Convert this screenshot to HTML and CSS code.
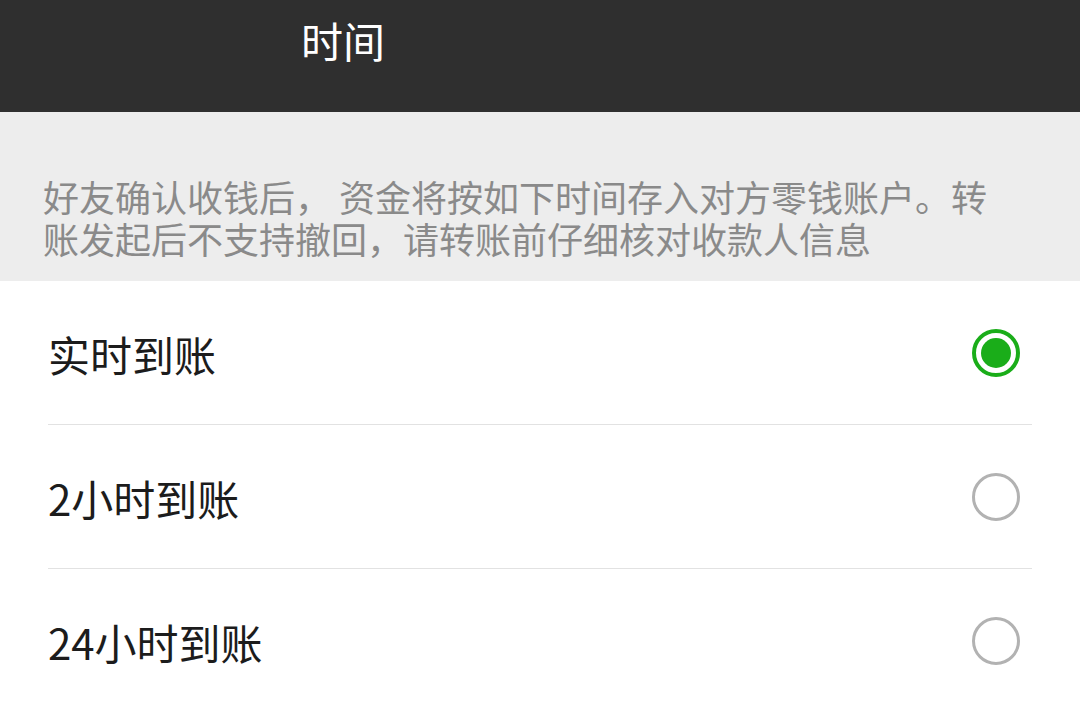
FILE: index.html
```html
<!DOCTYPE html>
<html lang="zh-CN">
<head>
<meta charset="utf-8">
<title>到账时间</title>
<link rel="stylesheet" href="styles.css">
</head>
<body>
<div class="page">
  <header class="header">
    <h1 class="title">时间</h1>
  </header>
  <section class="notice">
    <p class="notice-text">好友确认收钱后， 资金将按如下时间存入对方零钱账户。转账发起后不支持撤回，请转账前仔细核对收款人信息</p>
  </section>
  <ul class="options">
    <li class="option">
      <span class="option-label">实时到账</span>
      <svg class="radio" width="48" height="48" viewBox="0 0 48 48">
        <circle cx="24" cy="24" r="22" fill="#fff" stroke="#1aad19" stroke-width="4"/>
        <circle cx="24" cy="24" r="15" fill="#1aad19"/>
      </svg>
    </li>
    <li class="option">
      <span class="option-label">2小时到账</span>
      <svg class="radio" width="48" height="48" viewBox="0 0 48 48">
        <circle cx="24" cy="24" r="22.5" fill="#fff" stroke="#b2b2b2" stroke-width="3"/>
      </svg>
    </li>
    <li class="option">
      <span class="option-label">24小时到账</span>
      <svg class="radio" width="48" height="48" viewBox="0 0 48 48">
        <circle cx="24" cy="24" r="22.5" fill="#fff" stroke="#b2b2b2" stroke-width="3"/>
      </svg>
    </li>
  </ul>
</div>
</body>
</html>
```

FILE: styles.css
```css
* {
  box-sizing: border-box;
}

html, body {
  margin: 0;
  padding: 0;
  background: #ffffff;
}

body {
  font-family: "Noto Sans CJK SC", "Noto Sans", sans-serif;
  width: 1080px;
  height: 711px;
  overflow: hidden;
}

.page {
  display: flex;
  flex-direction: column;
}

.header {
  height: 112px;
  background: #2f2f2f;
  padding: 19px 0 0 301px;
}

.title {
  margin: 0;
  font-size: 42px;
  line-height: 42px;
  font-weight: 400;
  color: #ffffff;
}

.notice {
  background: #ededed;
  padding: 63px 77px 22px 43px;
}

.notice-text {
  margin: 0;
  font-size: 36px;
  line-height: 42px;
  color: #8a8a8a;
}

.options {
  list-style: none;
  margin: 0;
  padding: 0 48px;
  background: #ffffff;
}

.option {
  height: 144px;
  display: flex;
  align-items: center;
  justify-content: space-between;
  padding-right: 12px;
  border-bottom: 1px solid #e2e2e2;
}

.option:last-child {
  border-bottom: none;
}

.option-label {
  font-size: 42px;
  line-height: 42px;
  color: #1c1c1c;
  padding-top: 2px;
}

.radio {
  display: block;
  flex: none;
}
```
